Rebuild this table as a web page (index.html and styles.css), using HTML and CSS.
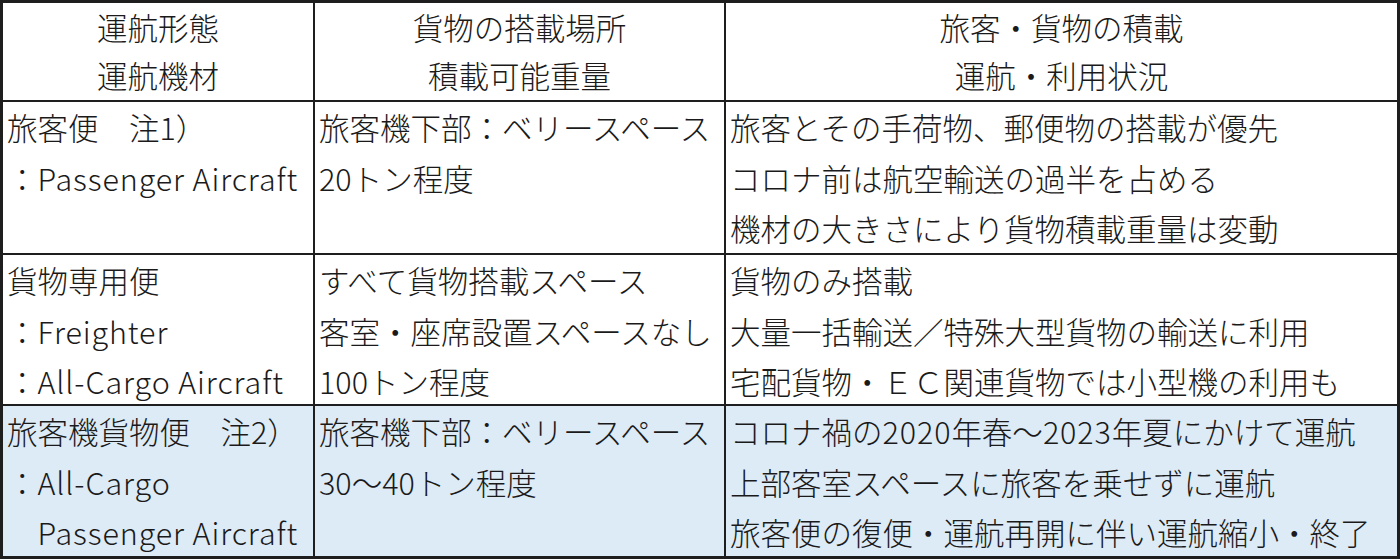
FILE: index.html
```html
<!DOCTYPE html>
<html lang="ja">
<head>
<meta charset="utf-8">
<link rel="stylesheet" href="styles.css">
</head>
<body>
<div class="grid">
  <div class="cell head">運航形態<br>運航機材</div>
  <div class="cell head">貨物の搭載場所<br>積載可能重量</div>
  <div class="cell head">旅客・貨物の積載<br>運航・利用状況</div>

  <div class="cell">旅客便　注1）<br>：<span class="lat">Passenger Aircraft</span></div>
  <div class="cell">旅客機下部：ベリースペース<br>20トン程度</div>
  <div class="cell">旅客とその手荷物、郵便物の搭載が優先<br>コロナ前は航空輸送の過半を占める<br>機材の大きさにより貨物積載重量は変動</div>

  <div class="cell">貨物専用便<br>：<span class="lat">Freighter</span><br>：<span class="lat">All-Cargo Aircraft</span></div>
  <div class="cell">すべて貨物搭載スペース<br>客室・座席設置スペースなし<br>100トン程度</div>
  <div class="cell">貨物のみ搭載<br>大量一括輸送／特殊大型貨物の輸送に利用<br>宅配貨物・ＥＣ関連貨物では小型機の利用も</div>

  <div class="cell blue">旅客機貨物便　注2）<br>：<span class="lat">All-Cargo</span><br>　<span class="lat">Passenger Aircraft</span></div>
  <div class="cell blue">旅客機下部：ベリースペース<br>30～40トン程度</div>
  <div class="cell blue">コロナ禍の<span class="lat">2020</span>年春～<span class="lat">2023</span>年夏にかけて運航<br>上部客室スペースに旅客を乗せずに運航<br>旅客便の復便・運航再開に伴い運航縮小・終了</div>
</div>
</body>
</html>
```

FILE: styles.css
```css
html, body {
  margin: 0;
  padding: 0;
  background: #ffffff;
}
.grid {
  width: 1400px;
  height: 559px;
  box-sizing: border-box;
  border: 3px solid #1e1e1e;
  background: #1e1e1e;
  display: grid;
  grid-template-columns: 310px 409px 671px;
  grid-template-rows: 97px 151px 149px 150px;
  gap: 2px;
  font-family: "Noto Sans CJK JP", sans-serif;
  font-weight: 300;
  font-size: 30.5px;
  color: #1a1a1a;
}
.cell {
  background: #ffffff;
  padding: 0 0 0 4px;
  line-height: 50.5px;
  white-space: nowrap;
  overflow: hidden;
}
.lat {
  letter-spacing: 0.9px;
}
.head {
  text-align: center;
  padding: 0;
  line-height: 48px;
}
.blue {
  background: #ddebf7;
}
```
